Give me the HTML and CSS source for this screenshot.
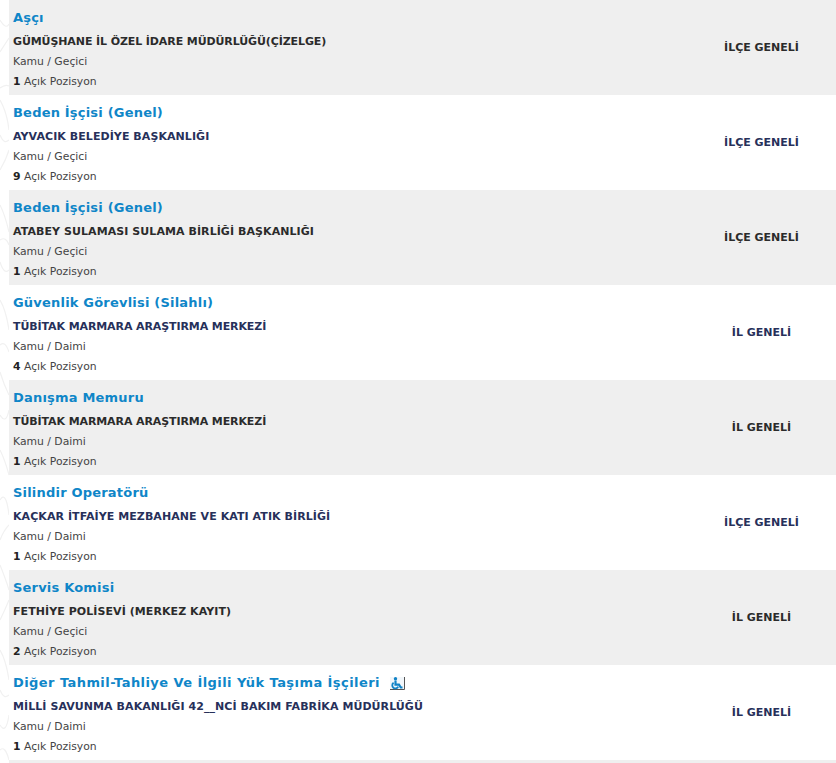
FILE: index.html
```html
<!DOCTYPE html>
<html lang="tr">
<head>
<meta charset="utf-8">
<title>İlanlar</title>
<link rel="stylesheet" href="styles.css">
</head>
<body>
<aside class="strip"><svg viewBox="0 0 9 763" width="9" height="763" aria-hidden="true"><g fill="none" stroke="#f1f1f1" stroke-width="1.2"><path d="M0 20Q6 30 9 24M0 52Q5 44 9 38M0 88Q5 84 9 86M0 100Q7 112 9 130M0 135Q4 145 9 140M0 170Q6 160 9 150M0 205Q5 215 9 232M0 240Q6 236 9 245M0 262Q4 275 9 270M0 300Q6 310 9 330M0 345Q5 340 9 352M0 372Q4 385 9 395M0 415Q6 425 9 410M0 450Q5 460 9 475M0 500Q6 490 9 515M0 540Q4 530 9 525M0 565Q6 580 9 590M0 620Q5 610 9 600M0 650Q6 660 9 680M0 690Q4 700 9 695M0 725Q6 735 9 715M0 750Q5 745 9 760"/></g></svg></aside>
<main class="list">
<article class="row"><div class="info"><h3 class="title">Aşçı</h3><p class="org org-tight">GÜMÜŞHANE İL ÖZEL İDARE MÜDÜRLÜĞÜ(ÇİZELGE)</p><p class="meta">Kamu / Geçici</p><p class="meta"><b>1</b> Açık Pozisyon</p></div><div class="scope">İLÇE GENELİ</div></article>
<article class="row"><div class="info"><h3 class="title">Beden İşçisi (Genel)</h3><p class="org">AYVACIK BELEDİYE BAŞKANLIĞI</p><p class="meta">Kamu / Geçici</p><p class="meta"><b>9</b> Açık Pozisyon</p></div><div class="scope">İLÇE GENELİ</div></article>
<article class="row"><div class="info"><h3 class="title">Beden İşçisi (Genel)</h3><p class="org">ATABEY SULAMASI SULAMA BİRLİĞİ BAŞKANLIĞI</p><p class="meta">Kamu / Geçici</p><p class="meta"><b>1</b> Açık Pozisyon</p></div><div class="scope">İLÇE GENELİ</div></article>
<article class="row"><div class="info"><h3 class="title">Güvenlik Görevlisi (Silahlı)</h3><p class="org org-tight">TÜBİTAK MARMARA ARAŞTIRMA MERKEZİ</p><p class="meta">Kamu / Daimi</p><p class="meta"><b>4</b> Açık Pozisyon</p></div><div class="scope">İL GENELİ</div></article>
<article class="row"><div class="info"><h3 class="title">Danışma Memuru</h3><p class="org org-tight">TÜBİTAK MARMARA ARAŞTIRMA MERKEZİ</p><p class="meta">Kamu / Daimi</p><p class="meta"><b>1</b> Açık Pozisyon</p></div><div class="scope">İL GENELİ</div></article>
<article class="row"><div class="info"><h3 class="title">Silindir Operatörü</h3><p class="org">KAÇKAR İTFAİYE MEZBAHANE VE KATI ATIK BİRLİĞİ</p><p class="meta">Kamu / Daimi</p><p class="meta"><b>1</b> Açık Pozisyon</p></div><div class="scope">İLÇE GENELİ</div></article>
<article class="row"><div class="info"><h3 class="title">Servis Komisi</h3><p class="org">FETHİYE POLİSEVİ (MERKEZ KAYIT)</p><p class="meta">Kamu / Geçici</p><p class="meta"><b>2</b> Açık Pozisyon</p></div><div class="scope">İL GENELİ</div></article>
<article class="row"><div class="info"><h3 class="title title-long">Diğer Tahmil-Tahliye Ve İlgili Yük Taşıma İşçileri<svg class="access" viewBox="0 0 15 13" width="15" height="13" aria-hidden="true"><rect width="14" height="12" fill="#f2f7fb"/><path d="M14.5 0v12.5H0" fill="none" stroke="#555" stroke-width="1"/><circle cx="5.5" cy="1.8" r="1.7" fill="#1283c6"/><path d="M5.5 3.5v4.2h3.5l1.8 2.8h1.7" fill="none" stroke="#1283c6" stroke-width="2.2"/><path d="M3.6 5.8a3.1 3.1 0 1 0 4.6 3.8" fill="none" stroke="#1283c6" stroke-width="1.8"/></svg></h3><p class="org">MİLLİ SAVUNMA BAKANLIĞI 42__NCİ BAKIM FABRİKA MÜDÜRLÜĞÜ</p><p class="meta">Kamu / Daimi</p><p class="meta"><b>1</b> Açık Pozisyon</p></div><div class="scope">İL GENELİ</div></article>
<div class="tail"></div>
</main>
</body>
</html>
```
FILE: styles.css
```css
html, body { margin: 0; padding: 0; }
body { display: flex; background: #fff; font-family: "DejaVu Sans", Verdana, sans-serif; overflow: hidden; height: 763px; }
.strip { flex: 0 0 9px; height: 763px; overflow: hidden; }
.strip svg { display: block; }
.list { flex: 1; min-width: 0; }
.row { display: flex; height: 95px; background: #fff; }
.row:nth-child(odd) { background: #efefef; }
.info { flex: 1; padding: 9px 0 0 4px; }
.title { margin: 0; height: 23px; font-size: 13px; line-height: 18px; font-weight: 700; color: #0f86c8; letter-spacing: 0.2px; }
.title-long { letter-spacing: 0.43px; }
.org { margin: 0; height: 20px; font-size: 11px; line-height: 20px; font-weight: 700; color: #27305a; letter-spacing: 0.07px; }
.org-tight { letter-spacing: -0.1px; }
.meta { margin: 0; height: 20px; font-size: 10.8px; line-height: 20px; color: #444; }
.meta b { color: #222; }
.scope { width: 149px; display: flex; align-items: center; justify-content: center; font-size: 11px; font-weight: 700; color: #27305a; }
.row:nth-child(odd) .org, .row:nth-child(odd) .scope { color: #2b2b2b; }
.access { margin-left: 10px; vertical-align: -3px; }
.tail { height: 3px; background: #efefef; }
```
